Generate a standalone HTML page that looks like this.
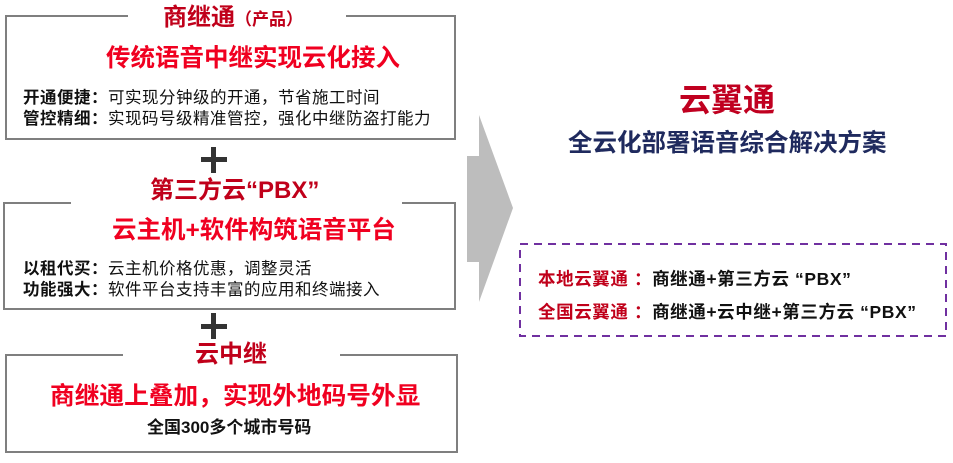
<!DOCTYPE html>
<html><head><meta charset="utf-8"><style>
body{margin:0;width:953px;height:463px;background:#fff;position:relative;overflow:hidden;font-family:"Liberation Sans","Noto Sans CJK SC",sans-serif;font-weight:bold}
.a{position:absolute;white-space:nowrap}
.box{position:absolute;border:2px solid #7f7f7f;box-sizing:border-box}
.gap{position:absolute;background:#fff;height:4px}
.dr{color:#c0001a}
.br{color:#f00020}
.ln{font-size:16.5px;line-height:21px;color:#111;letter-spacing:0.5px}
.ln span{font-weight:normal}
.plus{position:absolute;background:#333}
</style></head><body>
<div class="box" style="left:5px;top:15px;width:451px;height:125px"></div>
<div class="gap" style="left:128px;top:14px;width:218px"></div>
<div class="box" style="left:3px;top:202px;width:453px;height:108px"></div>
<div class="gap" style="left:71px;top:201px;width:331px"></div>
<div class="box" style="left:5px;top:354px;width:453px;height:99px"></div>
<div class="gap" style="left:123px;top:353px;width:217px"></div>

<div class="a dr" style="left:163px;top:3px;font-size:24px;line-height:30px">商继通<span style="font-size:17px">（产品）</span></div>
<div class="a br" style="left:106px;top:43px;font-size:24.5px;line-height:32px">传统语音中继实现云化接入</div>
<div class="a ln" style="left:23px;top:88px">开通便捷：<span>可实现分钟级的开通，节省施工时间</span><br>管控精细：<span>实现码号级精准管控，强化中继防盗打能力</span></div>

<div class="plus" style="left:201px;top:157px;width:26px;height:5px"></div>
<div class="plus" style="left:211px;top:147px;width:5px;height:26px"></div>

<div class="a dr" style="left:150px;top:176px;font-size:24px;line-height:30px">第三方云“PBX”</div>
<div class="a br" style="left:112px;top:215px;font-size:24.5px;line-height:32px">云主机+软件构筑语音平台</div>
<div class="a ln" style="left:23px;top:259px">以租代买：<span>云主机价格优惠，调整灵活</span><br>功能强大：<span>软件平台支持丰富的应用和终端接入</span></div>

<div class="plus" style="left:201px;top:324px;width:26px;height:5px"></div>
<div class="plus" style="left:211px;top:313px;width:5px;height:26px"></div>

<div class="a dr" style="left:195px;top:340px;font-size:24px;line-height:30px">云中继</div>
<div class="a br" style="left:50px;top:381px;font-size:24.7px;line-height:32px">商继通上叠加，实现外地码号外显</div>
<div class="a" style="left:147px;top:417px;font-size:17px;line-height:22px;color:#111">全国300多个城市号码</div>

<svg class="a" style="left:0;top:0" width="953" height="463"><polygon points="467,156 479,156 479,115 513,208 479,302 479,262 467,262" fill="#bdbdbd"/>
<rect x="520" y="244" width="426" height="92" fill="none" stroke="#7030a0" stroke-width="2" stroke-dasharray="8,6"/></svg>

<div class="a" style="left:679px;top:80px;font-size:32px;line-height:40px;color:#c00020">云翼通</div>
<div class="a" style="left:568px;top:128px;font-size:24.5px;line-height:32px;color:#1f2a5e">全云化部署语音综合解决方案</div>
<div class="a" style="left:538px;top:263px;font-size:17.5px;line-height:33px;color:#111;letter-spacing:0.6px"><span class="dr">本地云翼通 ：</span>商继通+第三方云 “PBX”<br><span class="dr">全国云翼通 ：</span>商继通+云中继+第三方云 “PBX”</div>
</body></html>
